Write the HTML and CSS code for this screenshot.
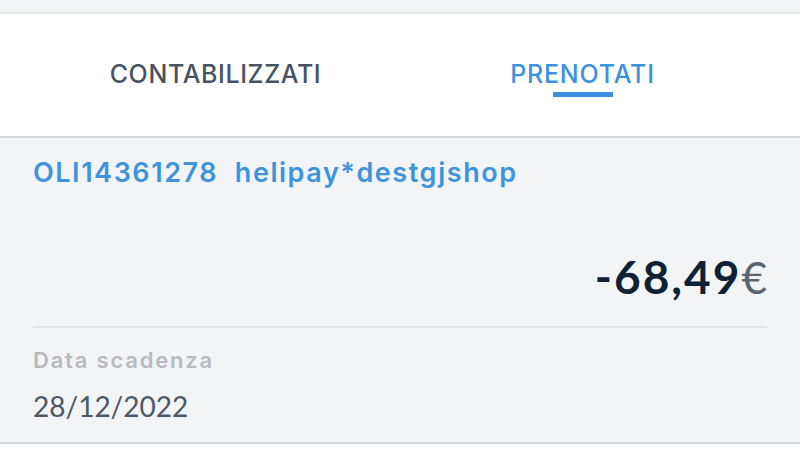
FILE: index.html
```html
<!DOCTYPE html>
<html lang="it">
<head>
<meta charset="utf-8">
<title>Prenotati</title>
<link rel="stylesheet" href="styles.css">
</head>
<body>
<div class="top-strip"></div>
<nav class="tabs">
  <div class="tab"><span class="tab-label">CONTABILIZZATI</span></div>
  <div class="tab tab-active"><span class="tab-label">PRENOTATI</span><span class="tab-bar"></span></div>
</nav>
<main class="movement">
  <div class="movement-title">OLI14361278&nbsp; helipay*destgjshop</div>
  <div class="amount-row"><span class="amount">-68,49</span><span class="currency">€</span></div>
  <div class="separator"></div>
  <div class="field-label">Data scadenza</div>
  <div class="field-value">28/12/2022</div>
</main>
</body>
</html>
```
FILE: styles.css
```css
html, body {
  margin: 0;
  padding: 0;
  background: #ffffff;
}
body {
  font-family: "Inter", "Open Sans", sans-serif;
  width: 800px;
  height: 452px;
  overflow: hidden;
}
.top-strip {
  height: 12px;
  background: #f3f4f6;
}
.tabs {
  display: flex;
  height: 122px;
  padding: 0 34px 0 32px;
  background: #ffffff;
  border-top: 2px solid #e4e6e9;
  border-bottom: 2px solid #d9dcdf;
}
.tab {
  flex: 1;
  display: flex;
  flex-direction: column;
  align-items: center;
  padding-top: 45px;
}
.tab-label {
  font-size: 25px;
  line-height: 30px;
  font-weight: 500;
  color: #485360;
  letter-spacing: 0.6px;
}
.tab-active .tab-label {
  color: #3f93dc;
  letter-spacing: 0.8px;
}
.tab-bar {
  margin-top: 3px;
  width: 60px;
  height: 5px;
  background: #3a8fe0;
}
.movement {
  background: #f3f4f6;
  padding: 19px 33px 16px 33px;
  border-bottom: 2px solid #d6d9dd;
}
.movement-title {
  font-size: 27px;
  line-height: 32px;
  font-weight: 600;
  color: #3e94dc;
  letter-spacing: 1.55px;
}
.amount-row {
  margin-top: 64px;
  display: flex;
  justify-content: flex-end;
  align-items: baseline;
  font-family: "Lato", sans-serif;
  line-height: 48px;
  height: 48px;
}
.amount {
  font-size: 46px;
  font-weight: 700;
  color: #0f2235;
  letter-spacing: 2px;
}
.currency {
  font-size: 44px;
  font-weight: 400;
  color: #5b6670;
  margin-left: 0;
}
.separator {
  margin-top: 25px;
  height: 2px;
  background: #e3e5e8;
}
.field-label {
  margin-top: 19px;
  font-size: 22px;
  line-height: 26px;
  font-weight: 600;
  color: #b7bbbf;
  letter-spacing: 1.8px;
}
.field-value {
  margin-top: 13px;
  font-family: "Lato", sans-serif;
  font-size: 28px;
  line-height: 40px;
  font-weight: 400;
  color: #4d5864;
}
```
